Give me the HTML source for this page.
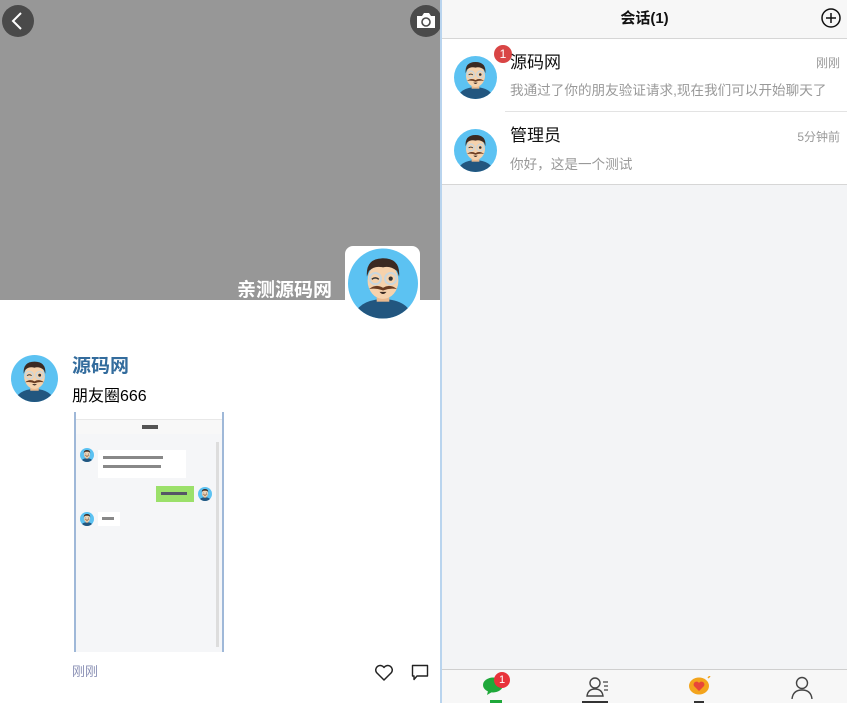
<!DOCTYPE html>
<html><head><meta charset="utf-8"><style>
*{margin:0;padding:0;box-sizing:border-box}
body{width:847px;height:703px;overflow:hidden;font-family:"Liberation Sans","Noto Sans CJK SC",sans-serif;background:#fff;position:relative}
.abs{position:absolute}
#left{left:0;top:0;width:440px;height:703px;background:#fff}
#cover{left:0;top:0;width:440px;height:300px;background:#979797}
#right{left:440px;top:0;width:407px;height:703px;background:#f3f4f6;border-left:2px solid #b9d4ee}
.av{display:block}
</style></head><body>
<svg width="0" height="0" style="position:absolute"><defs>
<symbol id="av" viewBox="0 0 100 100">
<circle cx="50" cy="50" r="50" fill="#5cc2f2"/>
<clipPath id="cc"><circle cx="50" cy="50" r="50"/></clipPath>
<g clip-path="url(#cc)">
<path d="M8 100 Q12 74 50 72 Q88 74 92 100Z" fill="#22567f"/>
<rect x="41" y="62" width="18" height="14" fill="#e9b98e"/>
<ellipse cx="50" cy="46" rx="22" ry="26" fill="#f6d2ac"/>
<path d="M27 40 Q25 14 50 14 Q75 14 73 40 L70 32 Q60 24 50 27 Q38 24 30 32Z" fill="#3b2a22"/>
<circle cx="39" cy="43" r="8" fill="none" stroke="#c9d6dc" stroke-width="3"/>
<circle cx="61" cy="43" r="8" fill="none" stroke="#c9d6dc" stroke-width="3"/>
<path d="M34 44 Q39 40 44 44" stroke="#333" stroke-width="2" fill="none"/>
<circle cx="61" cy="43" r="3" fill="#333"/>
<path d="M30 58 Q40 50 50 56 Q60 50 70 58 Q60 56 50 60 Q40 56 30 58Z" fill="#6b3d22"/>
<path d="M45 62 Q50 68 55 62Z" fill="#3b2a22"/>
</g></symbol></defs></svg>

<div id="left" class="abs">
<div id="cover" class="abs"></div>
<div class="abs" style="left:2px;top:5px;width:32px;height:32px;border-radius:50%;background:#4a4a4a"></div>
<svg class="abs" style="left:8px;top:11px" width="20" height="20" viewBox="0 0 20 20"><path d="M13 2 L5 10 L13 18" stroke="#fff" stroke-width="2" fill="none"/></svg>
<div class="abs" style="left:410px;top:5px;width:32px;height:32px;border-radius:50%;background:#4a4a4a"></div>
<svg class="abs" style="left:415px;top:11px" width="22" height="20" viewBox="0 0 22 20"><path d="M2 5 H7 L9 2 H14 L16 5 H20 V17 H2Z" fill="#fff"/><circle cx="11" cy="11" r="4" fill="none" stroke="#4a4a4a" stroke-width="1.6"/></svg>
<div class="abs" style="left:200px;top:279px;width:132px;text-align:right;color:#fff;font-weight:bold;font-size:19px;line-height:23px">亲测源码网</div>
<div class="abs" style="left:345px;top:246px;width:75px;height:75px;background:#fff;border-radius:8px;padding:1px 3px"><svg class="av" width="70" height="73" viewBox="0 0 100 104"><use href="#av"/></svg></div>

<svg class="abs av" style="left:11px;top:355px" width="47" height="47"><use href="#av"/></svg>
<div class="abs" style="left:72px;top:355px;color:#336c9d;font-weight:bold;font-size:19px;line-height:24px">源码网</div>
<div class="abs" style="left:72px;top:387px;color:#000;font-size:16px;line-height:20px">朋友圈666</div>
<div class="abs" style="left:74px;top:412px;width:150px;height:240px;background:#f5f6f8;border-left:2px solid #9fb8d8;border-right:2px solid #9fb8d8">
 <div class="abs" style="left:0;top:0;width:146px;height:8px;background:#fff;border-bottom:1px solid #e8e8e8"></div>
 <div class="abs" style="left:0;top:8px;width:146px;height:14px;background:#f8f8f8"></div>
 <div class="abs" style="left:66px;top:13px;width:16px;height:4px;background:#555"></div>
 <svg class="abs" style="left:4px;top:36px" width="14" height="14"><use href="#av"/></svg>
 <div class="abs" style="left:22px;top:38px;width:88px;height:28px;background:#fff"><div style="margin:6px 5px;height:3px;width:60px;background:#888"></div><div style="margin:0 5px;height:3px;width:58px;background:#888"></div></div>
 <div class="abs" style="left:80px;top:74px;width:38px;height:16px;background:#9be06a"><div style="margin:6px 5px;height:3px;width:26px;background:#556"></div></div>
 <svg class="abs" style="left:122px;top:75px" width="14" height="14"><use href="#av"/></svg>
 <svg class="abs" style="left:4px;top:100px" width="14" height="14"><use href="#av"/></svg>
 <div class="abs" style="left:22px;top:100px;width:22px;height:14px;background:#fff"><div style="margin:5px 4px;height:3px;width:12px;background:#888"></div></div>
 <div class="abs" style="left:140px;top:30px;width:3px;height:205px;background:#ddd"></div>
</div>
<div class="abs" style="left:72px;top:664px;color:#8a90b5;font-size:13px;line-height:16px">刚刚</div>
<svg class="abs" style="left:374px;top:664px" width="20" height="18" viewBox="0 0 20 18"><path d="M10 16 L2.5 8.5 A4.3 4.3 0 0 1 10 3.5 A4.3 4.3 0 0 1 17.5 8.5Z" fill="none" stroke="#222" stroke-width="1.5" stroke-linejoin="round"/></svg>
<svg class="abs" style="left:411px;top:664px" width="18" height="18" viewBox="0 0 18 18"><path d="M1.5 1.5 H16.5 V12 H6 L3 15.5 V12 H1.5Z" fill="none" stroke="#222" stroke-width="1.4" stroke-linejoin="round"/></svg>
</div>

<div id="right" class="abs">
<div class="abs" style="left:0;top:0;width:405px;height:39px;background:#f7f7f7;border-bottom:1px solid #d6d6d6;text-align:center;font-weight:bold;font-size:15px;line-height:38px;color:#111">会话(1)</div>
<svg class="abs" style="left:378px;top:7px" width="22" height="22" viewBox="0 0 22 22"><circle cx="11" cy="11" r="9" fill="none" stroke="#111" stroke-width="1.5"/><path d="M11 6V16M6 11H16" stroke="#111" stroke-width="1.5"/></svg>
<div class="abs" style="left:0;top:39px;width:405px;height:146px;background:#fff;border-bottom:1px solid #d6d6d6"></div>
<div class="abs" style="left:63px;top:111px;width:342px;height:1px;background:#e3e3e3"></div>
<svg class="abs av" style="left:12px;top:56px" width="43" height="43"><use href="#av"/></svg>
<div class="abs" style="left:52px;top:45px;width:18px;height:18px;border-radius:50%;background:#d94545;color:#fff;font-size:12px;line-height:18px;text-align:center">1</div>
<div class="abs" style="left:68px;top:52px;font-size:17px;line-height:22px;color:#111">源码网</div>
<div class="abs" style="right:7px;top:55px;font-size:12px;color:#999;line-height:16px">刚刚</div>
<div class="abs" style="left:68px;top:82px;font-size:13.6px;color:#999;line-height:18px">我通过了你的朋友验证请求,现在我们可以开始聊天了</div>
<svg class="abs av" style="left:12px;top:129px" width="43" height="43"><use href="#av"/></svg>
<div class="abs" style="left:68px;top:125px;font-size:17px;line-height:22px;color:#111">管理员</div>
<div class="abs" style="right:7px;top:129px;font-size:12px;color:#999;line-height:16px">5分钟前</div>
<div class="abs" style="left:68px;top:156px;font-size:13.6px;color:#999;line-height:18px">你好，这是一个测试</div>

<div class="abs" style="left:0;top:669px;width:405px;height:34px;background:#f7f7f7;border-top:1px solid #cfcfcf"></div>
<svg class="abs" style="left:40px;top:676px" width="24" height="20" viewBox="0 0 24 20"><ellipse cx="11" cy="9" rx="10" ry="7.5" fill="#1fa83a"/><path d="M6 15 L5 19 L10 16Z" fill="#1fa83a"/></svg>
<div class="abs" style="left:52px;top:672px;width:16px;height:16px;border-radius:50%;background:#e8323a;color:#fff;font-size:11px;line-height:16px;text-align:center">1</div>
<div class="abs" style="left:48px;top:700px;width:12px;height:3px;background:#1fa83a"></div>
<svg class="abs" style="left:144px;top:676px" width="24" height="22" viewBox="0 0 24 22"><circle cx="9" cy="7" r="5" fill="none" stroke="#444" stroke-width="1.4"/><path d="M1 20 Q2 13 9 13 Q16 13 17 20Z" fill="none" stroke="#444" stroke-width="1.4"/><path d="M17 6H22M18 10H22M18 14H22" stroke="#444" stroke-width="1.3"/></svg>
<div class="abs" style="left:140px;top:701px;width:26px;height:2px;background:#333"></div>
<svg class="abs" style="left:246px;top:676px" width="24" height="20" viewBox="0 0 24 20"><ellipse cx="11" cy="10" rx="10" ry="8.5" fill="#f3a41c"/><path d="M11 15 L6 10 A2.6 2.6 0 0 1 11 7 A2.6 2.6 0 0 1 16 10Z" fill="#e8463a"/><path d="M20 2 L22 0" stroke="#f3a41c" stroke-width="1.5"/></svg>
<div class="abs" style="left:252px;top:701px;width:10px;height:2px;background:#333"></div>
<svg class="abs" style="left:348px;top:675px" width="24" height="24" viewBox="0 0 24 24"><circle cx="12" cy="8" r="5.5" fill="none" stroke="#444" stroke-width="1.4"/><path d="M2 24 Q3 15 12 15 Q21 15 22 24" fill="none" stroke="#444" stroke-width="1.4"/></svg>
</div>
</body></html>
